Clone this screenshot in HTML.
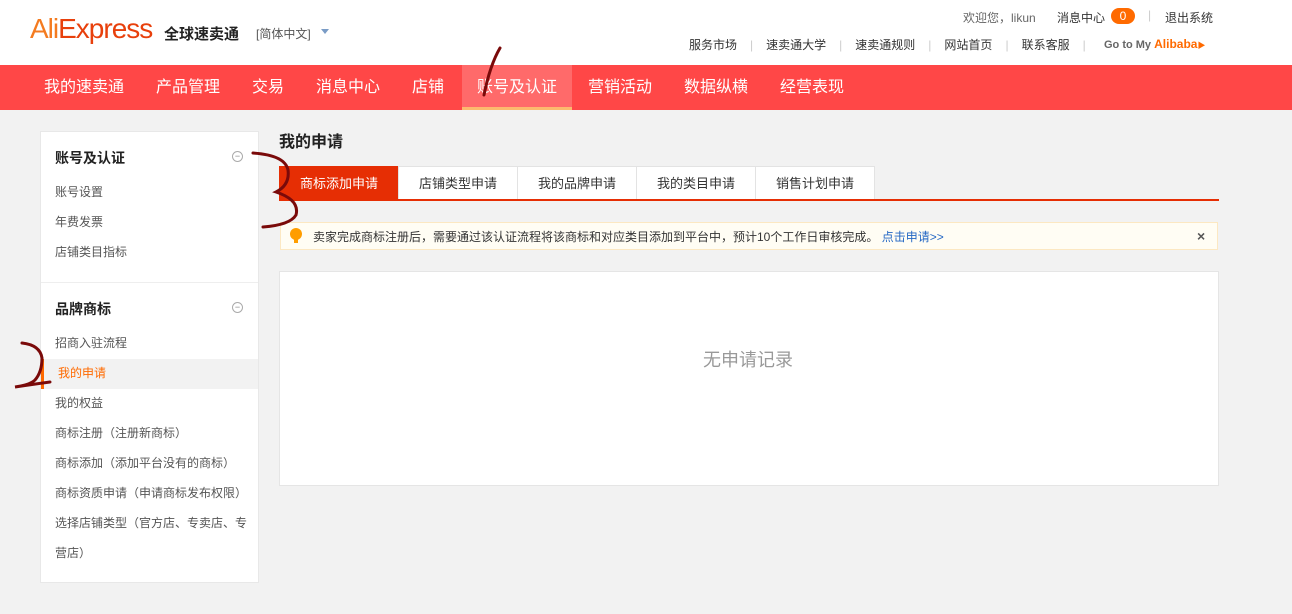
<!DOCTYPE html>
<html><head><meta charset="utf-8"><style>
*{margin:0;padding:0;box-sizing:border-box}
body{width:1292px;height:614px;background:#f2f2f2;font-family:"Liberation Sans","Noto Sans CJK SC",sans-serif;position:relative;overflow:hidden;font-size:12px;color:#333}
.a{position:absolute;white-space:nowrap}
#hdr{position:absolute;left:0;top:0;width:1292px;height:65px;background:#fff}
#nav{position:absolute;left:0;top:65px;width:1292px;height:45px;background:#ff4747}
.nv{position:absolute;top:0;height:45px;line-height:45px;color:#fff;font-size:16px}
.sep{color:#ccc}
#side{position:absolute;left:40px;top:131px;width:219px;height:452px;background:#fff;border:1px solid #e8e8e8}
.st{font-size:14px;font-weight:bold;color:#222}
.si{font-size:12px;color:#555}
.circ{position:absolute;width:11px;height:11px;border:1px solid #aaa;border-radius:50%;font-size:9px;line-height:8px;text-align:center;color:#888}
.tab{position:absolute;top:166px;height:33px;line-height:33px;text-align:center;background:#fff;border:1px solid #e3e3e3;border-bottom:none;font-size:13px;color:#333}
</style></head><body>
<div id="hdr"></div>
<div class="a" style="left:30px;top:13px;font-size:28px;color:#e8400c;letter-spacing:-1px"><span style="color:#f47b20">Ali</span>Express</div>
<div class="a" style="left:164px;top:23px;font-size:15px;color:#222;font-weight:bold">全球速卖通</div>
<div class="a" style="left:256px;top:25px;font-size:12px;color:#555">[简体中文]</div>
<div class="a" style="left:321px;top:29px;width:0;height:0;border-left:4px solid transparent;border-right:4px solid transparent;border-top:5px solid #7a9cc6"></div>
<div class="a" style="left:963px;top:9px;font-size:12px;color:#666">欢迎您，likun</div>
<div class="a" style="left:1057px;top:9px;font-size:12px;color:#333">消息中心</div>
<div class="a" style="left:1111px;top:8px;width:24px;height:16px;border-radius:8px;background:#ff6a00;color:#fff;text-align:center;font-size:12px;line-height:16px">0</div>
<div class="a sep" style="left:1148px;top:8px">|</div>
<div class="a" style="left:1165px;top:9px;color:#333">退出系统</div>
<div class="a" style="left:689px;top:36px;color:#333;word-spacing:0">服务市场<span class="sep" style="margin:0 13px">|</span>速卖通大学<span class="sep" style="margin:0 13px">|</span>速卖通规则<span class="sep" style="margin:0 13px">|</span>网站首页<span class="sep" style="margin:0 13px">|</span>联系客服<span class="sep" style="margin:0 13px">|</span></div>
<div class="a" style="left:1104px;top:37px;font-size:11px;font-weight:bold;color:#666">Go to My <span style="color:#ff6a00;font-size:12px">Alibaba</span><span style="color:#ff6a00;font-size:8px">▶</span></div>
<div id="nav">
<div class="a" style="left:462px;top:0;width:110px;height:45px;background:#ff6a6a;border-bottom:3px solid #fdb96e"></div>
<div class="nv" style="left:44px">我的速卖通</div>
<div class="nv" style="left:156px">产品管理</div>
<div class="nv" style="left:252px">交易</div>
<div class="nv" style="left:316px">消息中心</div>
<div class="nv" style="left:412px">店铺</div>
<div class="nv" style="left:477px">账号及认证</div>
<div class="nv" style="left:588px">营销活动</div>
<div class="nv" style="left:684px">数据纵横</div>
<div class="nv" style="left:780px">经营表现</div>
</div>
<div id="side">
<div class="a st" style="left:14px;top:16px">账号及认证</div>
<div class="circ" style="left:191px;top:19px">−</div>
<div class="a si" style="left:14px;top:51px">账号设置</div>
<div class="a si" style="left:14px;top:81px">年费发票</div>
<div class="a si" style="left:14px;top:111px">店铺类目指标</div>
<div class="a" style="left:0;top:150px;width:217px;height:1px;background:#eee"></div>
<div class="a st" style="left:14px;top:167px">品牌商标</div>
<div class="circ" style="left:191px;top:170px">−</div>
<div class="a si" style="left:14px;top:202px">招商入驻流程</div>
<div class="a" style="left:0;top:227px;width:217px;height:30px;background:#f2f2f2;border-left:3px solid #ff6a00"></div>
<div class="a si" style="left:17px;top:232px;color:#ff6a00">我的申请</div>
<div class="a si" style="left:14px;top:262px">我的权益</div>
<div class="a si" style="left:14px;top:292px">商标注册（注册新商标）</div>
<div class="a si" style="left:14px;top:322px">商标添加（添加平台没有的商标）</div>
<div class="a si" style="left:14px;top:352px">商标资质申请（申请商标发布权限）</div>
<div class="a si" style="left:14px;top:382px">选择店铺类型（官方店、专卖店、专</div>
<div class="a si" style="left:14px;top:412px">营店）</div>
</div>
<div class="a" style="left:279px;top:128px;font-size:16px;font-weight:bold;color:#222">我的申请</div>
<div class="tab" style="left:279px;width:120px;background:#e62e04;border-color:#e62e04;color:#fff">商标添加申请</div>
<div class="tab" style="left:398px;width:120px">店铺类型申请</div>
<div class="tab" style="left:517px;width:120px">我的品牌申请</div>
<div class="tab" style="left:636px;width:120px">我的类目申请</div>
<div class="tab" style="left:755px;width:120px">销售计划申请</div>
<div class="a" style="left:279px;top:199px;width:940px;height:2px;background:#e62e04"></div>
<div class="a" style="left:280px;top:222px;width:938px;height:28px;background:#fffdf4;border:1px solid #fce8c2"></div>
<div class="a" style="left:290px;top:228px;width:12px;height:12px;border-radius:50%;background:#ff9d00"></div>
<div class="a" style="left:294px;top:239px;width:4px;height:4px;background:#ff9d00"></div>
<div class="a" style="left:313px;top:228px;font-size:12px;color:#333">卖家完成商标注册后，需要通过该认证流程将该商标和对应类目添加到平台中，预计10个工作日审核完成。 <span style="color:#2568c4">点击申请&gt;&gt;</span></div>
<div class="a" style="left:1197px;top:228px;font-size:14px;font-weight:bold;color:#555">×</div>
<div class="a" style="left:279px;top:271px;width:940px;height:215px;background:#fff;border:1px solid #e5e5e5"></div>
<div class="a" style="left:703px;top:346px;font-size:18px;color:#999">无申请记录</div>
<svg class="a" style="left:0;top:0" width="1292" height="614"><g fill="none" stroke="#7a0a0a" stroke-width="3" stroke-linecap="round">
<path d="M500 48 Q490 65 484 95"/>
<path d="M253 153 Q285 155 288 170 Q290 185 276 192 Q300 200 296 215 Q290 225 263 227"/>
<path d="M22 343 Q40 345 42 358 Q42 372 35 380 Q30 385 15 387 Q35 384 50 382"/>
</g></svg>
</body></html>
